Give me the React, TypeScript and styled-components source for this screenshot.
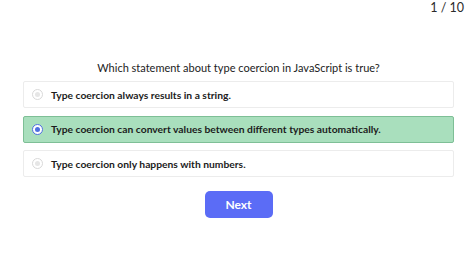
import styled, { createGlobalStyle } from "styled-components";

const GlobalStyle = createGlobalStyle`
  html, body {
    margin: 0;
    padding: 0;
    background: #ffffff;
  }
  body {
    font-family: Lato, "Open Sans", "Liberation Sans", sans-serif;
    color: #1f1f1f;
  }
`;

const Page = styled.div`
  width: 474px;
  height: 263px;
  display: flex;
  flex-direction: column;
  box-sizing: border-box;
  padding: 0 20px 0 23px;
`;

const TopBar = styled.div`
  display: flex;
  justify-content: flex-end;
  height: 20px;
`;

const Counter = styled.span`
  font-size: 12.5px;
  line-height: 16px;
  color: #2b2b2b;
  margin-right: -10px;
`;

const Question = styled.h2`
  margin: 41px 0 6px;
  font-size: 11px;
  font-weight: 400;
  text-align: center;
  color: #222;
  line-height: 14px;
`;

const Options = styled.div`
  display: flex;
  flex-direction: column;
  gap: 7.5px;
`;

const Option = styled.label<{ $selected?: boolean }>`
  display: flex;
  align-items: center;
  gap: 8px;
  height: 27px;
  box-sizing: border-box;
  padding: 0 8px;
  border: 1px solid ${(p) => (p.$selected ? "#7ebf96" : "#ececec")};
  background: ${(p) => (p.$selected ? "#a9dfbd" : "#ffffff")};
  border-radius: 2px;
  font-size: 10.3px;
  font-weight: 700;
  color: #1c1c1c;
`;

const Radio = styled.span<{ $selected?: boolean }>`
  width: 11px;
  height: 11px;
  border-radius: 50%;
  box-sizing: border-box;
  border: 1.5px solid ${(p) => (p.$selected ? "#4f6fe0" : "#d9d9d9")};
  background: #fff;
  display: flex;
  align-items: center;
  justify-content: center;
  flex-shrink: 0;

  &::after {
    content: "";
    width: 5px;
    height: 5px;
    border-radius: 50%;
    background: ${(p) => (p.$selected ? "#4f6fe0" : "#e6e6e6")};
  }
`;

const Footer = styled.div`
  display: flex;
  justify-content: center;
  margin-top: 14px;
`;

const NextButton = styled.button`
  width: 68px;
  height: 27px;
  border: none;
  border-radius: 5px;
  background: #5b6cf6;
  color: #fff;
  font-family: inherit;
  font-size: 12px;
  font-weight: 700;
  cursor: pointer;
`;

const answers = [
  { text: "Type coercion always results in a string.", selected: false },
  { text: "Type coercion can convert values between different types automatically.", selected: true },
  { text: "Type coercion only happens with numbers.", selected: false },
];

export default function App() {
  return (
    <>
      <GlobalStyle />
      <Page>
        <TopBar>
          <Counter>1 / 10</Counter>
        </TopBar>
        <Question>Which statement about type coercion in JavaScript is true?</Question>
        <Options>
          {answers.map((a) => (
            <Option key={a.text} $selected={a.selected}>
              <Radio $selected={a.selected} />
              {a.text}
            </Option>
          ))}
        </Options>
        <Footer>
          <NextButton>Next</NextButton>
        </Footer>
      </Page>
    </>
  );
}
